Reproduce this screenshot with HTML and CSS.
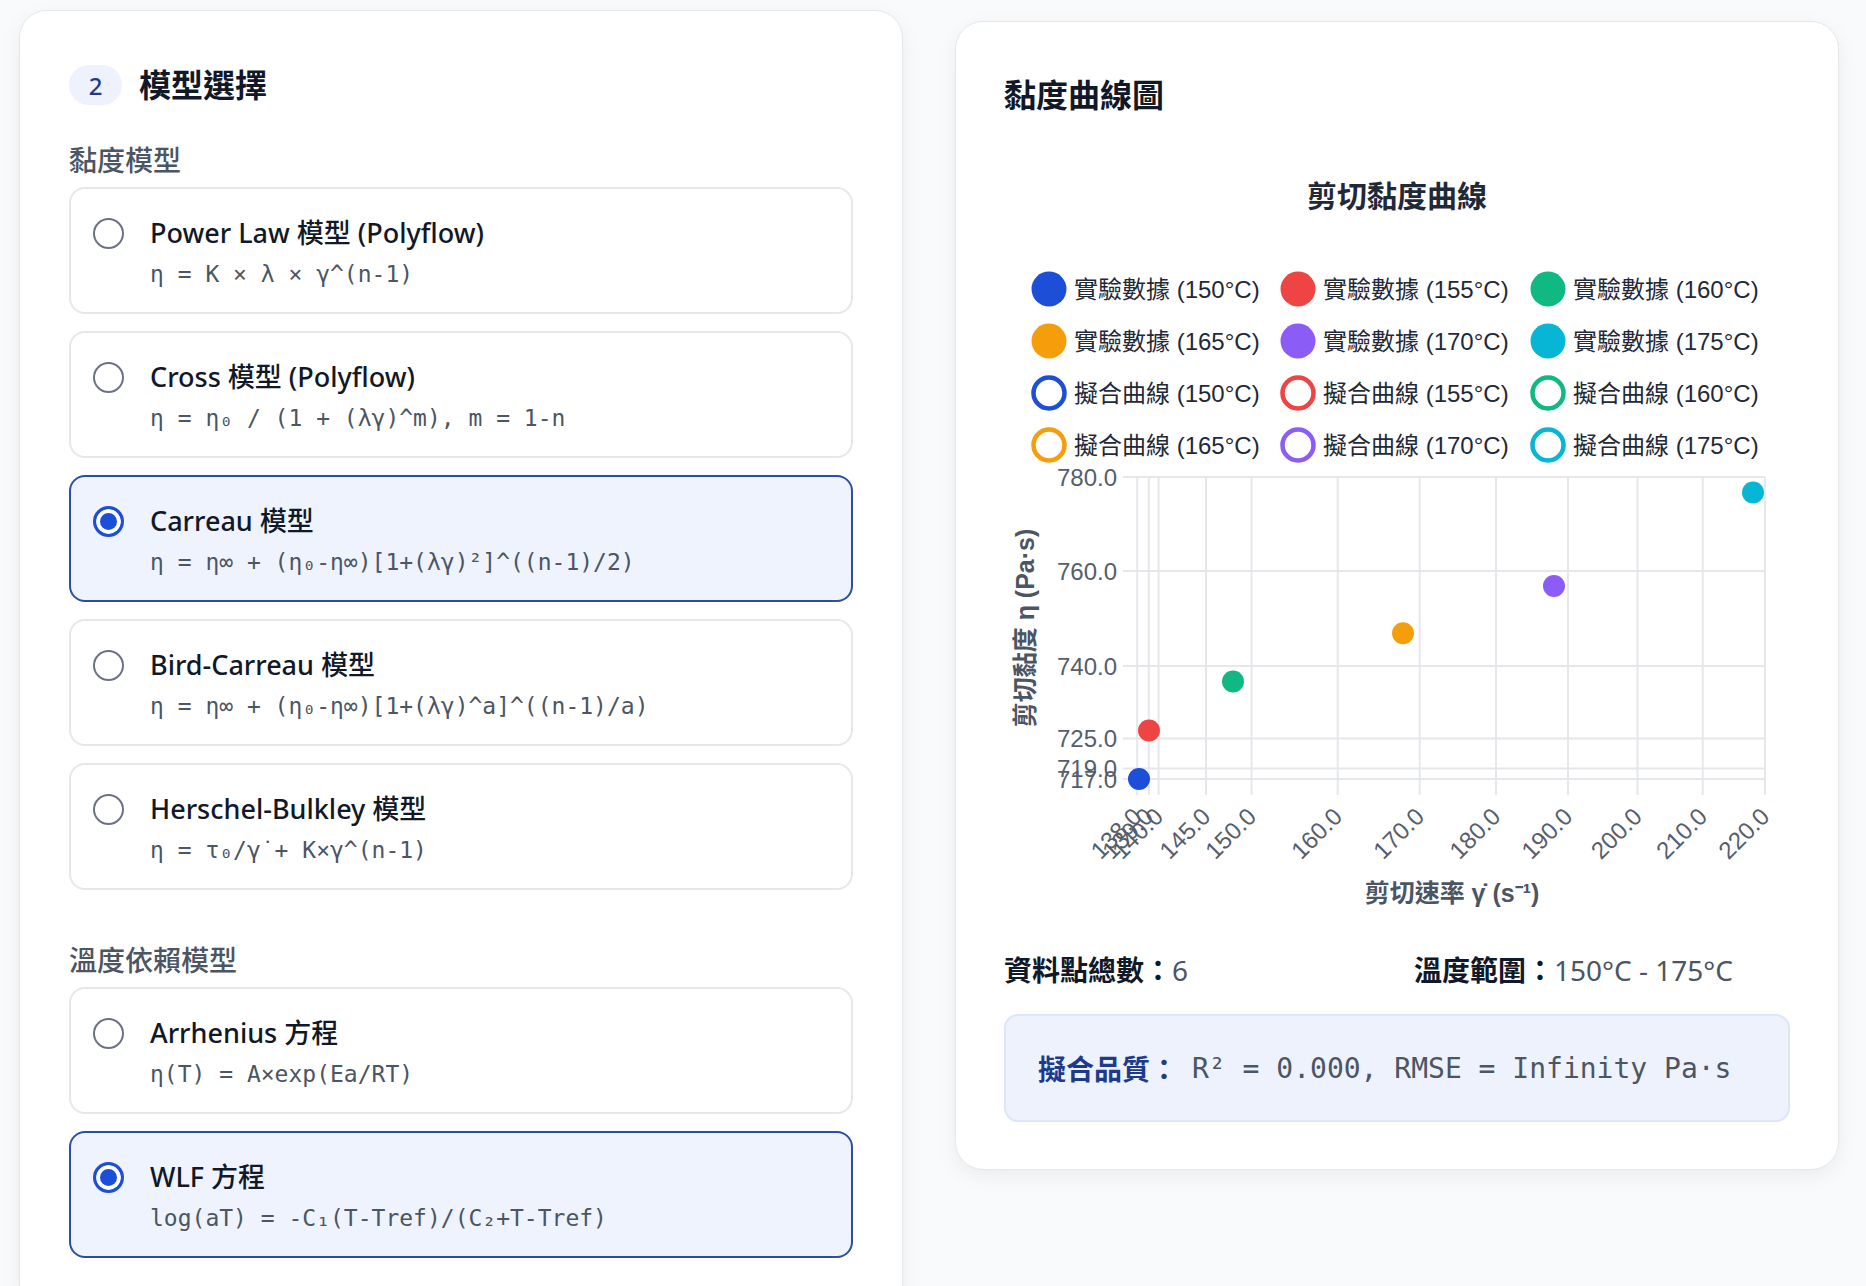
FILE: index.html
```html
<!DOCTYPE html>
<html>
<head>
    <title>模型選擇與黏度曲線</title>
    <link rel="stylesheet" href="styles.css">
</head>
<body>

<div class="layout">

    <section class="card card-left">
        <div class="step-head">
            <span class="step-no">2</span>
            <h2>模型選擇</h2>
        </div>

        <div class="group">
            <div class="group-label">黏度模型</div>
            <div class="options">
                <div class="option">
                    <span class="radio"></span>
                    <div class="option-body">
                        <div class="option-title">Power Law 模型 (Polyflow)</div>
                        <div class="formula">η = K × λ × γ^(n-1)</div>
                    </div>
                </div>
                <div class="option">
                    <span class="radio"></span>
                    <div class="option-body">
                        <div class="option-title">Cross 模型 (Polyflow)</div>
                        <div class="formula">η = η₀ / (1 + (λγ)^m), m = 1-n</div>
                    </div>
                </div>
                <div class="option selected">
                    <span class="radio"></span>
                    <div class="option-body">
                        <div class="option-title">Carreau 模型</div>
                        <div class="formula">η = η∞ + (η₀-η∞)[1+(λγ)²]^((n-1)/2)</div>
                    </div>
                </div>
                <div class="option">
                    <span class="radio"></span>
                    <div class="option-body">
                        <div class="option-title">Bird-Carreau 模型</div>
                        <div class="formula">η = η∞ + (η₀-η∞)[1+(λγ)^a]^((n-1)/a)</div>
                    </div>
                </div>
                <div class="option">
                    <span class="radio"></span>
                    <div class="option-body">
                        <div class="option-title">Herschel-Bulkley 模型</div>
                        <div class="formula">η = τ₀/γ̇ + K×γ^(n-1)</div>
                    </div>
                </div>
            </div>
        </div>

        <div class="group group-temp">
            <div class="group-label">溫度依賴模型</div>
            <div class="options">
                <div class="option">
                    <span class="radio"></span>
                    <div class="option-body">
                        <div class="option-title">Arrhenius 方程</div>
                        <div class="formula">η(T) = A×exp(Ea/RT)</div>
                    </div>
                </div>
                <div class="option selected">
                    <span class="radio"></span>
                    <div class="option-body">
                        <div class="option-title">WLF 方程</div>
                        <div class="formula">log(aT) = -C₁(T-Tref)/(C₂+T-Tref)</div>
                    </div>
                </div>
            </div>
        </div>
    </section>

    <section class="card card-right">
        <h2>黏度曲線圖</h2>

        <svg class="chart" width="786" height="780" viewBox="0 0 786 780">
            <text class="chart-title" x="393" y="46">剪切黏度曲線</text>

            <!-- legend -->
            <g class="legend">
                <circle cx="45" cy="139" r="17.5" fill="#1d4ed8"/>
                <text x="70" y="139">實驗數據 (150°C)</text>
                <circle cx="294" cy="139" r="17.5" fill="#ef4444"/>
                <text x="319" y="139">實驗數據 (155°C)</text>
                <circle cx="544" cy="139" r="17.5" fill="#10b981"/>
                <text x="569" y="139">實驗數據 (160°C)</text>

                <circle cx="45" cy="191" r="17.5" fill="#f59e0b"/>
                <text x="70" y="191">實驗數據 (165°C)</text>
                <circle cx="294" cy="191" r="17.5" fill="#8b5cf6"/>
                <text x="319" y="191">實驗數據 (170°C)</text>
                <circle cx="544" cy="191" r="17.5" fill="#06b6d4"/>
                <text x="569" y="191">實驗數據 (175°C)</text>

                <circle class="ring" cx="45" cy="243" r="15.5" stroke="#1d4ed8"/>
                <text x="70" y="243">擬合曲線 (150°C)</text>
                <circle class="ring" cx="294" cy="243" r="15.5" stroke="#ef4444"/>
                <text x="319" y="243">擬合曲線 (155°C)</text>
                <circle class="ring" cx="544" cy="243" r="15.5" stroke="#10b981"/>
                <text x="569" y="243">擬合曲線 (160°C)</text>

                <circle class="ring" cx="45" cy="295" r="15.5" stroke="#f59e0b"/>
                <text x="70" y="295">擬合曲線 (165°C)</text>
                <circle class="ring" cx="294" cy="295" r="15.5" stroke="#8b5cf6"/>
                <text x="319" y="295">擬合曲線 (170°C)</text>
                <circle class="ring" cx="544" cy="295" r="15.5" stroke="#06b6d4"/>
                <text x="569" y="295">擬合曲線 (175°C)</text>
            </g>

            <!-- grid -->
            <g class="grid">
                <line x1="119" y1="327" x2="761" y2="327"/>
                <line x1="119" y1="421" x2="761" y2="421"/>
                <line x1="119" y1="516" x2="761" y2="516"/>
                <line x1="119" y1="588.5" x2="761" y2="588.5"/>
                <line x1="119" y1="618.5" x2="761" y2="618.5"/>
                <line x1="119" y1="629" x2="761" y2="629"/>

                <line x1="133.2" y1="327" x2="133.2" y2="645"/>
                <line x1="144.8" y1="327" x2="144.8" y2="645"/>
                <line x1="154.6" y1="327" x2="154.6" y2="645"/>
                <line x1="202" y1="327" x2="202" y2="645"/>
                <line x1="247.6" y1="327" x2="247.6" y2="645"/>
                <line x1="333.7" y1="327" x2="333.7" y2="645"/>
                <line x1="415.7" y1="327" x2="415.7" y2="645"/>
                <line x1="492" y1="327" x2="492" y2="645"/>
                <line x1="564" y1="327" x2="564" y2="645"/>
                <line x1="633.5" y1="327" x2="633.5" y2="645"/>
                <line x1="698.7" y1="327" x2="698.7" y2="645"/>
                <line x1="761" y1="327" x2="761" y2="645"/>
            </g>

            <!-- y ticks -->
            <g class="tick tick-y">
                <text x="113" y="327">780.0</text>
                <text x="113" y="421">760.0</text>
                <text x="113" y="516">740.0</text>
                <text x="113" y="588.5">725.0</text>
                <text x="113" y="618.5">719.0</text>
                <text x="113" y="629">717.0</text>
            </g>

            <!-- x ticks -->
            <g class="tick tick-x">
                <text transform="translate(133.2 662) rotate(-45)">138.0</text>
                <text transform="translate(144.8 662) rotate(-45)">139.0</text>
                <text transform="translate(154.6 662) rotate(-45)">140.0</text>
                <text transform="translate(202 662) rotate(-45)">145.0</text>
                <text transform="translate(247.6 662) rotate(-45)">150.0</text>
                <text transform="translate(333.7 662) rotate(-45)">160.0</text>
                <text transform="translate(415.7 662) rotate(-45)">170.0</text>
                <text transform="translate(492 662) rotate(-45)">180.0</text>
                <text transform="translate(564 662) rotate(-45)">190.0</text>
                <text transform="translate(633.5 662) rotate(-45)">200.0</text>
                <text transform="translate(698.7 662) rotate(-45)">210.0</text>
                <text transform="translate(761 662) rotate(-45)">220.0</text>
            </g>

            <text class="axis-title" transform="translate(21 478) rotate(-90)">剪切黏度 η (Pa·s)</text>
            <text class="axis-title" x="448" y="743">剪切速率 γ̇ (s⁻¹)</text>

            <!-- data points -->
            <circle cx="135" cy="629" r="11" fill="#1d4ed8"/>
            <circle cx="145" cy="580.5" r="11" fill="#ef4444"/>
            <circle cx="229" cy="531.5" r="11" fill="#10b981"/>
            <circle cx="399" cy="483.3" r="11" fill="#f59e0b"/>
            <circle cx="550" cy="436" r="11" fill="#8b5cf6"/>
            <circle cx="749" cy="342.5" r="11" fill="#06b6d4"/>
        </svg>

        <div class="stats">
            <div class="stat"><b>資料點總數：</b><span>6</span></div>
            <div class="stat"><b>溫度範圍：</b><span>150°C - 175°C</span></div>
        </div>

        <div class="fit">
            <span class="fit-label">擬合品質：</span>
            <span class="fit-value">R² = 0.000, RMSE = Infinity Pa·s</span>
        </div>
    </section>

</div>

</body>
</html>
```

FILE: styles.css
```css
body { margin: 0; background-color: #f8fafc; font-family: "Noto Sans", "Noto Sans CJK TC", sans-serif; color: #111827; }

.layout { display: grid; grid-template-columns: 884px 884px; column-gap: 52px; padding: 10px 0 0 19px; align-items: start; }

.card { background-color: #fff; border: 1px solid #e5e7eb; border-radius: 28px; box-shadow: 0 6px 20px rgba(15, 23, 42, 0.06); }
.card-left { padding: 54px 49px 60px; }
.card-right { margin-top: 11px; padding: 50px 48px 47px; }

h2 { margin: 0; font-size: 32px; line-height: 46px; font-weight: 700; color: #111827; }

.step-head { display: flex; align-items: center; gap: 17px; height: 40px; }
.step-head h2 { line-height: 40px; }
.step-no { width: 53px; height: 40px; border-radius: 20px; background-color: #eef2fc; color: #1e3a8a; font-size: 24px; font-weight: 500; display: flex; align-items: center; justify-content: center; }

.group-label { margin: 37px 0 9px; font-size: 28px; line-height: 36px; font-weight: 500; color: #4b5563; }
.group-temp .group-label { margin-top: 52px; }

.options { display: flex; flex-direction: column; gap: 17px; }
.option { display: flex; align-items: flex-start; gap: 26px; border: 2px solid #e5e7eb; border-radius: 16px; padding: 22px 24px 19px 22px; background-color: #fff; }
.option.selected { background-color: #eef3fd; border-color: #2d4fa3; }

.radio { flex: none; box-sizing: border-box; width: 31px; height: 31px; margin-top: 7px; border: 2px solid #6b7280; border-radius: 50%; background-color: #fff; }
.option.selected .radio { border: 3px solid #1d4ed8; background-color: #1d4ed8; box-shadow: inset 0 0 0 4px #fff; }

.option-title { font-size: 27px; line-height: 44px; font-weight: 500; color: #111827; }
.formula { font-family: "DejaVu Sans Mono", monospace; font-size: 23px; line-height: 38px; color: #4b5563; }

.chart { display: block; margin-top: 32px; }
.chart text { font-family: "Liberation Sans", "Noto Sans CJK TC", sans-serif; dominant-baseline: central; }
.chart .chart-title { font-size: 30px; font-weight: 700; fill: #1f2937; text-anchor: middle; }
.legend text { font-size: 24px; fill: #1f2937; }
.legend .ring { fill: #fff; stroke-width: 4.5; }
.grid line { stroke: #e5e7eb; stroke-width: 2; }
.tick text { font-size: 24px; fill: #555e6c; text-anchor: end; }
.chart .axis-title { font-size: 25px; font-weight: 700; fill: #4b5563; text-anchor: middle; }

.stats { display: grid; grid-template-columns: 1fr 1fr; column-gap: 34px; margin-top: 20px; font-size: 28px; line-height: 40px; }
.stat b { font-weight: 700; color: #111827; }
.stat span { font-weight: 400; color: #4b5563; }

.fit { box-sizing: border-box; height: 108px; margin-top: 24px; padding: 0 32px; display: flex; align-items: center; background-color: #edf2fd; border: 2px solid #dce5f9; border-radius: 14px; font-size: 28px; }
.fit-label { font-weight: 700; color: #1e3a8a; }
.fit-value { margin-left: 14px; font-family: "DejaVu Sans Mono", monospace; color: #4b5563; }
```
